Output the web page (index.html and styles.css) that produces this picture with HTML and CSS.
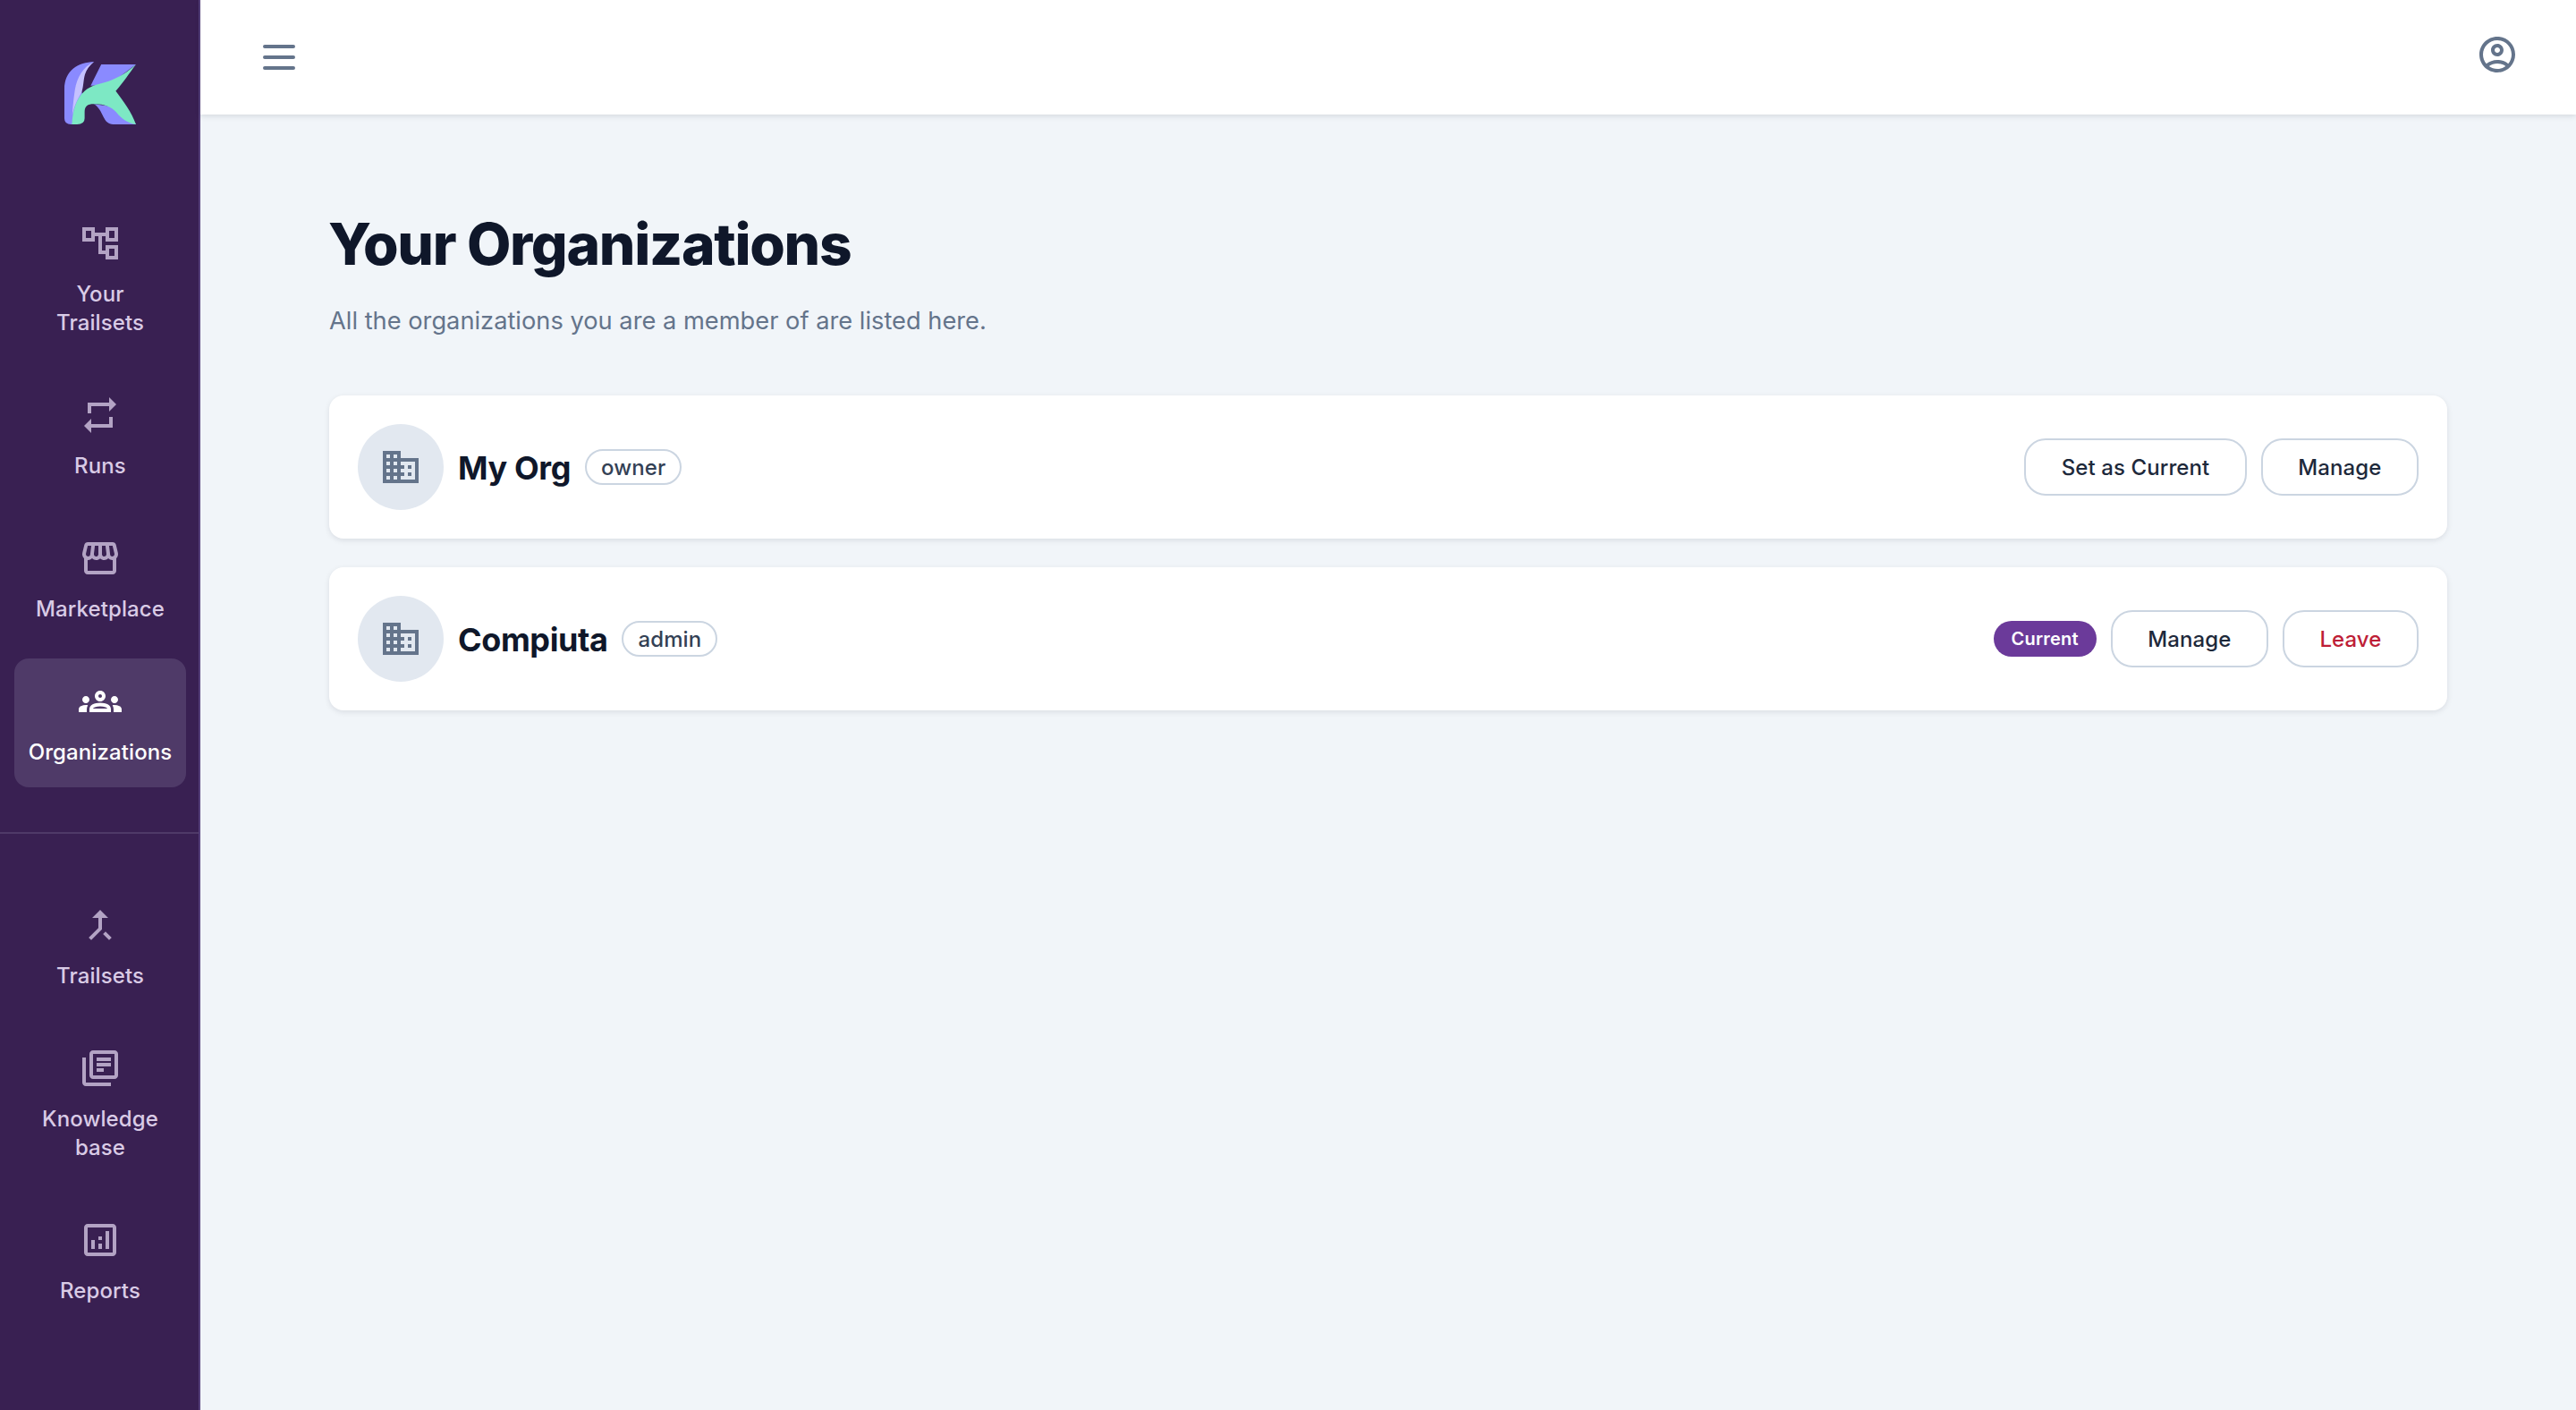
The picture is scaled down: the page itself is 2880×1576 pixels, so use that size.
FILE: index.html
```html
<!DOCTYPE html>
<html lang="en">
<head>
<meta charset="utf-8">
<title>Your Organizations</title>
<link rel="stylesheet" href="styles.css">
</head>
<body>
<div class="app">
  <aside class="sidebar">
    <div class="logo-wrap">
      <svg class="logo" viewBox="68 58 237 207" aria-label="Logo">
        <path fill="#8a8aff" d="M166 58C115 60 68 85 68 150V245Q68 265 90 265H100L130 180L120 130C130 100 145 75 166 58Z"/>
        <path fill="#c5c1ff" d="M166 58C130 75 110 110 103 150C98 185 96 205 94 235C100 205 112 180 122 165C132 148 130 120 136 100C142 82 152 70 166 58Z"/>
        <path fill="#8a8aff" d="M190 67H305L215 135L155 137Z"/>
        <path fill="#8a8aff" d="M165 198L250 210L305 265H230C212 265 205 255 197 240C190 225 180 205 165 198Z"/>
        <path fill="#7de8c4" d="M305 67C280 100 265 125 238 155C265 190 290 225 305 265C280 262 255 245 240 225C222 205 195 197 165 198C145 198 135 205 135 225V245Q135 265 110 265H93C95 225 105 180 135 155C155 135 190 130 215 122C250 110 280 90 305 67Z"/>
      </svg>
    </div>
    <nav class="nav">
      <a class="nav-item">
        <svg class="nav-icon" viewBox="0 0 24 24"><path d="M22 11V3h-7v3H9V3H2v8h7V8h2v10h4v3h7v-8h-7v3h-2V8h2v3h7zM7 9H4V5h3v4zm10 6h3v4h-3v-4zm0-10h3v4h-3V5z"/></svg>
        <span class="nav-label">Your<br>Trailsets</span>
      </a>
      <a class="nav-item">
        <svg class="nav-icon" viewBox="0 0 24 24"><path d="M7 7h10v3l4-4-4-4v3H5v6h2V7zm10 10H7v-3l-4 4 4 4v-3h12v-6h-2v4z"/></svg>
        <span class="nav-label">Runs</span>
      </a>
      <a class="nav-item">
        <svg class="nav-icon" viewBox="0 0 24 24"><path d="M21.9 8.89l-1.05-4.37c-.22-.9-1-1.52-1.91-1.52H5.05c-.9 0-1.69.63-1.9 1.52L2.1 8.89c-.24 1.02-.02 2.06.62 2.88.08.11.19.19.28.29V19c0 1.1.9 2 2 2h14c1.1 0 2-.9 2-2v-6.94c.09-.09.2-.18.28-.28.64-.82.87-1.87.62-2.89zm-2.99-3.9l1.05 4.37c.1.42.01.84-.25 1.17-.14.18-.44.47-.94.47-.61 0-1.14-.49-1.21-1.14L16.98 5l1.93-.01zM13 5h1.96l.54 4.52c.05.39-.07.78-.33 1.07-.22.26-.54.41-.95.41-.67 0-1.22-.59-1.22-1.31V5zM8.49 9.52L9.04 5H11v4.69c0 .72-.55 1.31-1.29 1.31-.34 0-.65-.15-.89-.41-.25-.29-.37-.68-.33-1.07zm-4.45-.16L5.05 5h1.97l-.58 4.86c-.08.65-.6 1.14-1.21 1.14-.49 0-.8-.29-.93-.47-.27-.32-.36-.75-.26-1.17zM5 19v-6.03c.08.01.15.03.23.03.87 0 1.66-.36 2.24-.95.6.6 1.4.95 2.31.95.87 0 1.65-.36 2.23-.93.59.57 1.39.93 2.29.93.84 0 1.64-.35 2.24-.95.58.59 1.37.95 2.24.95.08 0 .15-.02.23-.03V19H5z"/></svg>
        <span class="nav-label">Marketplace</span>
      </a>
      <a class="nav-item active">
        <svg class="nav-icon" viewBox="0 0 24 24"><path d="M4 13c1.1 0 2-.9 2-2s-.9-2-2-2-2 .9-2 2 .9 2 2 2zm1.13 1.1c-.37-.06-.74-.1-1.13-.1-.99 0-1.93.21-2.78.58C.48 14.9 0 15.62 0 16.43V18h4.5v-1.61c0-.83.23-1.61.63-2.29zM20 13c1.1 0 2-.9 2-2s-.9-2-2-2-2 .9-2 2 .9 2 2 2zm4 3.43c0-.81-.48-1.53-1.22-1.85-.85-.37-1.79-.58-2.78-.58-.39 0-.76.04-1.13.1.4.68.63 1.46.63 2.29V18H24v-1.57zm-7.76-2.78c-1.17-.52-2.61-.9-4.24-.9-1.63 0-3.07.39-4.24.9C6.68 14.13 6 15.21 6 16.39V18h12v-1.61c0-1.18-.68-2.26-1.76-2.74zM8.07 16c.09-.23.13-.39.91-.69.97-.38 1.99-.56 3.02-.56s2.05.18 3.02.56c.77.3.81.46.91.69H8.07zM12 8c.55 0 1 .45 1 1s-.45 1-1 1-1-.45-1-1 .45-1 1-1m0-2c-1.66 0-3 1.34-3 3s1.34 3 3 3 3-1.34 3-3-1.34-3-3-3z"/></svg>
        <span class="nav-label">Organizations</span>
      </a>
    </nav>
    <div class="nav-divider"></div>
    <nav class="nav">
      <a class="nav-item">
        <svg class="nav-icon" viewBox="0 0 24 24"><path d="M17 20.41L18.41 19 15 15.59 13.59 17 17 20.41zM7.5 8H11v5.59L5.59 19 7 20.41l6-6V8h3.5L12 3.5 7.5 8z"/></svg>
        <span class="nav-label">Trailsets</span>
      </a>
      <a class="nav-item">
        <svg class="nav-icon" viewBox="0 0 24 24"><path d="M4 6H2v14c0 1.1.9 2 2 2h14v-2H4V6zm16-4H8c-1.1 0-2 .9-2 2v12c0 1.1.9 2 2 2h12c1.1 0 2-.9 2-2V4c0-1.1-.9-2-2-2zm0 14H8V4h12v12zm-10-7h8v2h-8zm0 3h4v2h-4zm0-6h8v2h-8z"/></svg>
        <span class="nav-label">Knowledge<br>base</span>
      </a>
      <a class="nav-item">
        <svg class="nav-icon" viewBox="0 0 24 24"><path d="M19 3H5c-1.1 0-2 .9-2 2v14c0 1.1.9 2 2 2h14c1.1 0 2-.9 2-2V5c0-1.1-.9-2-2-2zm0 16H5V5h14v14zM7 12h2v5H7zm8-5h2v10h-2zm-4 7h2v3h-2zm0-4h2v2h-2z"/></svg>
        <span class="nav-label">Reports</span>
      </a>
    </nav>
  </aside>
  <div class="main">
    <header class="topbar">
      <svg class="menu-icon" viewBox="0 0 36 28"><path d="M2 2h32M2 14h32M2 26h32"/></svg>
      <svg class="user-icon" viewBox="0 0 24 24"><path d="M12 2C6.48 2 2 6.48 2 12s4.48 10 10 10 10-4.48 10-10S17.52 2 12 2zM7.35 18.5C8.66 17.56 10.26 17 12 17s3.34.56 4.65 1.5c-1.31.94-2.91 1.5-4.65 1.5s-3.34-.56-4.65-1.5zm10.79-1.38C16.45 15.8 14.32 15 12 15s-4.45.8-6.14 2.12C4.7 15.73 4 13.95 4 12c0-4.42 3.58-8 8-8s8 3.58 8 8c0 1.95-.7 3.73-1.86 5.12z"/><path d="M12 6c-1.93 0-3.5 1.57-3.5 3.5S10.07 13 12 13s3.5-1.57 3.5-3.5S13.93 6 12 6zm0 5c-.83 0-1.5-.67-1.5-1.5S11.17 8 12 8s1.5.67 1.5 1.5S12.83 11 12 11z"/></svg>
    </header>
    <main class="content">
      <h1 class="title">Your Organizations</h1>
      <p class="subtitle">All the organizations you are a member of are listed here.</p>
      <div class="cards">
        <section class="card">
          <div class="avatar"><svg class="avatar-icon" viewBox="0 0 24 24"><path d="M12 7V3H2v18h20V7H12zM6 19H4v-2h2v2zm0-4H4v-2h2v2zm0-4H4V9h2v2zm0-4H4V5h2v2zm4 12H8v-2h2v2zm0-4H8v-2h2v2zm0-4H8V9h2v2zm0-4H8V5h2v2zm10 12h-8v-2h2v-2h-2v-2h2v-2h-2V9h8v10zm-2-8h-2v2h2v-2zm0 4h-2v2h2v-2z"/></svg></div>
          <h2 class="org-name">My Org</h2>
          <span class="role">owner</span>
          <div class="actions">
            <button class="btn">Set as Current</button>
            <button class="btn">Manage</button>
          </div>
        </section>
        <section class="card">
          <div class="avatar"><svg class="avatar-icon" viewBox="0 0 24 24"><path d="M12 7V3H2v18h20V7H12zM6 19H4v-2h2v2zm0-4H4v-2h2v2zm0-4H4V9h2v2zm0-4H4V5h2v2zm4 12H8v-2h2v2zm0-4H8v-2h2v2zm0-4H8V9h2v2zm0-4H8V5h2v2zm10 12h-8v-2h2v-2h-2v-2h2v-2h-2V9h8v10zm-2-8h-2v2h2v-2zm0 4h-2v2h2v-2z"/></svg></div>
          <h2 class="org-name">Compiuta</h2>
          <span class="role">admin</span>
          <div class="actions">
            <span class="current">Current</span>
            <button class="btn">Manage</button>
            <button class="btn btn-danger">Leave</button>
          </div>
        </section>
      </div>
    </main>
  </div>
</div>
</body>
</html>
```
FILE: styles.css
```css
* { box-sizing: border-box; }
html, body { margin: 0; height: 100%; }
body { font-family: Inter, "Liberation Sans", sans-serif; background: #f1f5f9; color: #0f172a; }
.app { display: flex; height: 1576px; overflow: hidden; }
.sidebar { width: 224px; flex: none; background: #392052; box-shadow: inset -2px 0 0 #55407a; display: flex; flex-direction: column; }
.logo-wrap { height: 224px; flex: none; padding: 69px 0 0 72px; }
.logo { display: block; width: 80px; height: 70px; }
.nav { display: flex; flex-direction: column; gap: 16px; padding: 0 16px; }
.nav-item { display: flex; flex-direction: column; align-items: center; gap: 16px; padding: 24px 0; border-radius: 16px; color: #d9cbe6; }
.nav-icon { width: 48px; height: 48px; display: block; fill: #b3a3c4; }
.nav-label { font-size: 24px; line-height: 32px; font-weight: 500; text-align: center; letter-spacing: .1px; padding-top: 1px; margin-bottom: -1px; }
.nav-item.active { background: #4f3a68; color: #fff; }
.nav-item.active .nav-icon { fill: #fff; }
.nav-divider { height: 2px; background: #4f3a68; margin: 50px 2px 54px 0; flex: none; }
.main { flex: 1; min-width: 0; display: flex; flex-direction: column; }
.topbar { height: 128px; flex: none; background: #fff; box-shadow: 0 2px 6px rgba(15, 23, 42, .12); display: flex; justify-content: space-between; padding: 0 64px 0 70px; position: relative; }
.menu-icon { width: 36px; height: 28px; margin-top: 50px; fill: none; stroke: #64748b; stroke-width: 4px; stroke-linecap: round; }
.user-icon { width: 48px; height: 48px; margin-top: 37px; fill: #64748b; }
.content { padding: 109px 144px 0; }
.title { margin: 0 0 0 -1px; font-size: 64px; line-height: 72px; font-weight: 800; letter-spacing: -1.3px; color: #0f172a; }
.subtitle { margin: 30px 0 63px; font-size: 27.25px; line-height: 40px; color: #64748b; }
.cards { display: flex; flex-direction: column; gap: 32px; }
.card { height: 160px; padding: 0 32px; background: #fff; border-radius: 16px; box-shadow: 0 2px 6px rgba(15, 23, 42, .1); display: flex; align-items: center; }
.avatar { width: 96px; height: 96px; border-radius: 50%; background: #e2e8f0; display: flex; align-items: center; justify-content: center; margin-right: 16px; flex: none; }
.avatar-icon { width: 48px; height: 48px; fill: #64748b; }
.org-name { margin: 0 16px 0 0; padding-top: 1px; font-size: 36px; line-height: 48px; font-weight: 700; letter-spacing: -.4px; color: #0f172a; }
.role { height: 40px; padding: 0 16px; border: 2px solid #cbd5e1; border-radius: 20px; font-size: 24px; line-height: 37px; font-weight: 500; letter-spacing: .1px; color: #334155; }
.actions { margin-left: auto; display: flex; align-items: center; gap: 16px; }
.btn { height: 64px; padding: 1px 39.5px 0; background: #fff; border: 2px solid #cbd5e1; border-radius: 24px; font: 500 24px/32px Inter, "Liberation Sans", sans-serif; letter-spacing: .1px; color: #1e293b; }
.btn-danger { color: #be1e37; }
.current { height: 40px; padding: 0 20px; border-radius: 20px; background: #6b3a9a; color: #fff; font-size: 20px; line-height: 40px; font-weight: 600; letter-spacing: .2px; }
```
